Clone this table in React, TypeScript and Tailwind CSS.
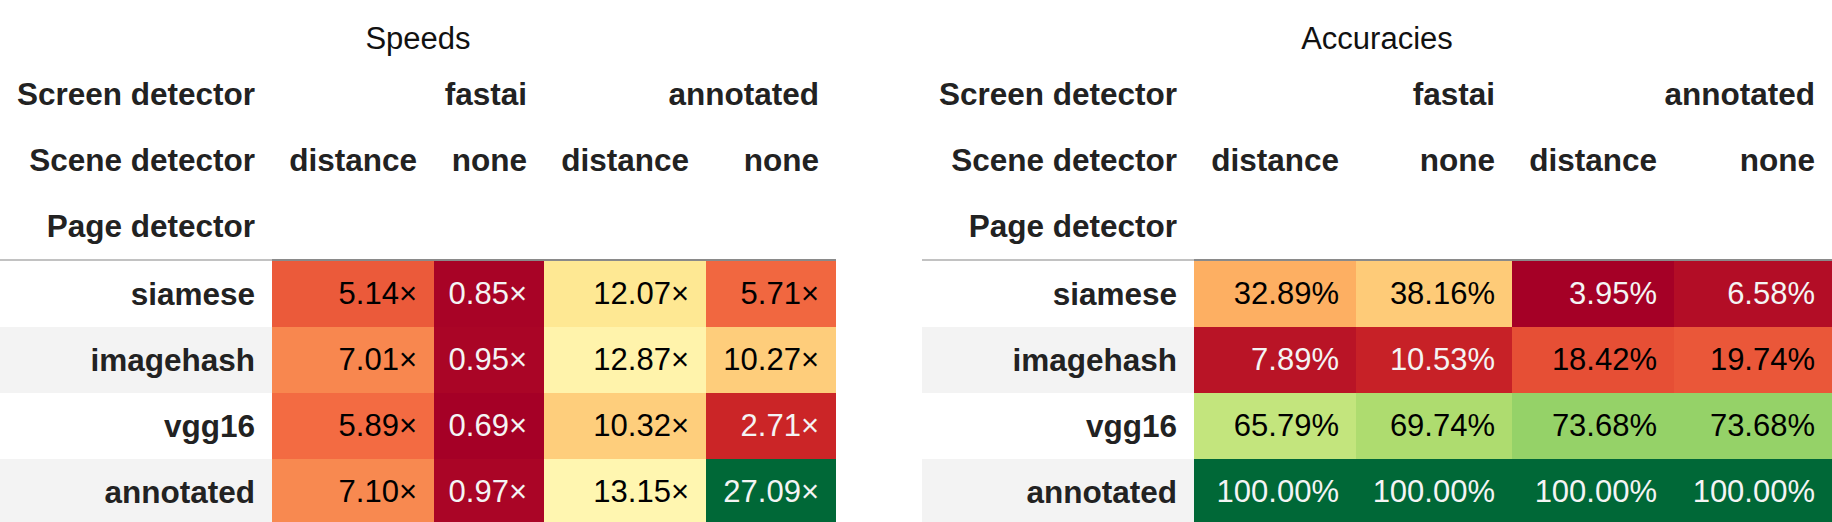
import React from "react";

type Cell = { v: string; bg: string; light?: boolean };

type PanelProps = {
  title: string;
  width: string;
  cols: string[];
  rows: { label: string; cells: Cell[] }[];
};

const speeds: PanelProps = {
  title: "Speeds",
  width: "w-[836px]",
  cols: ["w-[272px]", "w-[162px]", "w-[110px]", "w-[162px]", "w-[130px]"],
  rows: [
    {
      label: "siamese",
      cells: [
        { v: "5.14×", bg: "bg-[#eb5a3a]" },
        { v: "0.85×", bg: "bg-[#a80326]", light: true },
        { v: "12.07×", bg: "bg-[#fee893]" },
        { v: "5.71×", bg: "bg-[#f16740]" },
      ],
    },
    {
      label: "imagehash",
      cells: [
        { v: "7.01×", bg: "bg-[#f8874f]" },
        { v: "0.95×", bg: "bg-[#aa0526]", light: true },
        { v: "12.87×", bg: "bg-[#fff3ab]" },
        { v: "10.27×", bg: "bg-[#fecd7b]" },
      ],
    },
    {
      label: "vgg16",
      cells: [
        { v: "5.89×", bg: "bg-[#f36b42]" },
        { v: "0.69×", bg: "bg-[#a50026]", light: true },
        { v: "10.32×", bg: "bg-[#fece7c]" },
        { v: "2.71×", bg: "bg-[#cb2527]", light: true },
      ],
    },
    {
      label: "annotated",
      cells: [
        { v: "7.10×", bg: "bg-[#f88950]" },
        { v: "0.97×", bg: "bg-[#aa0526]", light: true },
        { v: "13.15×", bg: "bg-[#fff6b0]" },
        { v: "27.09×", bg: "bg-[#006837]", light: true },
      ],
    },
  ],
};

const accuracies: PanelProps = {
  title: "Accuracies",
  width: "w-[910px]",
  cols: ["w-[272px]", "w-[162px]", "w-[156px]", "w-[162px]", "w-[158px]"],
  rows: [
    {
      label: "siamese",
      cells: [
        { v: "32.89%", bg: "bg-[#fdaf62]" },
        { v: "38.16%", bg: "bg-[#fecb78]" },
        { v: "3.95%", bg: "bg-[#a50026]", light: true },
        { v: "6.58%", bg: "bg-[#b30d26]", light: true },
      ],
    },
    {
      label: "imagehash",
      cells: [
        { v: "7.89%", bg: "bg-[#b91426]", light: true },
        { v: "10.53%", bg: "bg-[#c72127]", light: true },
        { v: "18.42%", bg: "bg-[#e64f35]" },
        { v: "19.74%", bg: "bg-[#ea5739]" },
      ],
    },
    {
      label: "vgg16",
      cells: [
        { v: "65.79%", bg: "bg-[#c3e57d]" },
        { v: "69.74%", bg: "bg-[#aedc6f]" },
        { v: "73.68%", bg: "bg-[#95d268]" },
        { v: "73.68%", bg: "bg-[#95d268]" },
      ],
    },
    {
      label: "annotated",
      cells: [
        { v: "100.00%", bg: "bg-[#006837]", light: true },
        { v: "100.00%", bg: "bg-[#006837]", light: true },
        { v: "100.00%", bg: "bg-[#006837]", light: true },
        { v: "100.00%", bg: "bg-[#006837]", light: true },
      ],
    },
  ],
};

const head = "h-[66px] p-0 pr-[17px] text-right align-middle font-bold text-[31.5px] leading-[66px] text-[#222] whitespace-nowrap";

function Panel({ title, width, cols, rows }: PanelProps) {
  return (
    <div className={`${width} shrink-0`}>
      <div className="h-[61px] pt-[23px] text-center text-[31px] leading-[31px] text-[#111]">{title}</div>
      <table className="w-full table-fixed border-collapse">
        <colgroup>
          {cols.map((c, i) => (
            <col key={i} className={c} />
          ))}
        </colgroup>
        <thead>
          <tr>
            <th className={head}>Screen detector</th>
            <th className={head} colSpan={2}>fastai</th>
            <th className={head} colSpan={2}>annotated</th>
          </tr>
          <tr>
            <th className={head}>Scene detector</th>
            <th className={head}>distance</th>
            <th className={head}>none</th>
            <th className={head}>distance</th>
            <th className={head}>none</th>
          </tr>
          <tr>
            <th className={`${head} border-b-2 border-[#c2c2c2]`}>Page detector</th>
            <th className="border-b-2 border-[#8a8a8a] p-0" />
            <th className="border-b-2 border-[#8a8a8a] p-0" />
            <th className="border-b-2 border-[#8a8a8a] p-0" />
            <th className="border-b-2 border-[#8a8a8a] p-0" />
          </tr>
        </thead>
        <tbody>
          {rows.map((r, i) => (
            <tr key={r.label}>
              <th className={`${head} ${i % 2 === 1 ? "bg-[#f3f3f3]" : "bg-white"}`}>{r.label}</th>
              {r.cells.map((c, j) => (
                <td
                  key={j}
                  className={`h-[66px] p-0 pr-[17px] text-right align-middle text-[31px] leading-[66px] whitespace-nowrap ${c.bg} ${
                    c.light ? "text-[#f4f4f4]" : "text-black"
                  }`}
                >
                  {c.v}
                </td>
              ))}
            </tr>
          ))}
        </tbody>
      </table>
    </div>
  );
}

export default function App() {
  return (
    <div className="flex h-[522px] w-[1832px] gap-[86px] overflow-hidden bg-white font-['Liberation_Sans',Arial,sans-serif]">
      <Panel {...speeds} />
      <Panel {...accuracies} />
    </div>
  );
}
